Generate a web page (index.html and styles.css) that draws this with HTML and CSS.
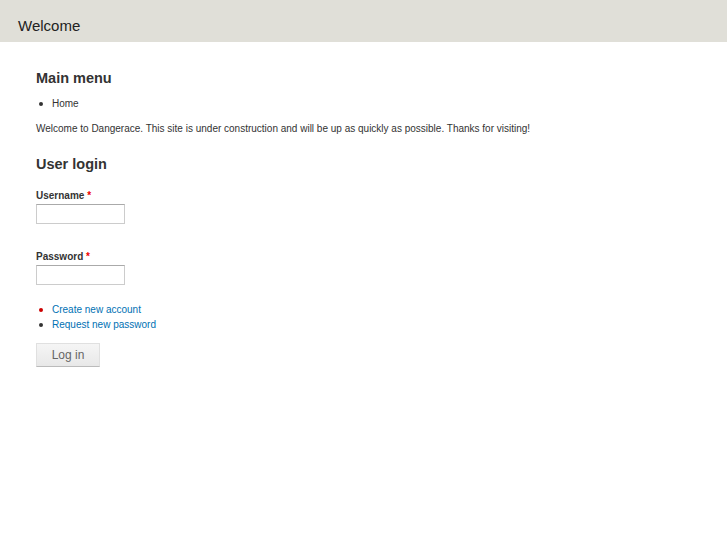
FILE: index.html
```html
<!DOCTYPE html>
<html>
<head>
<meta charset="utf-8">
<link rel="stylesheet" href="styles.css">
</head>
<body>
<header class="topbar"><span class="site-title">Welcome</span></header>
<main class="content">
  <section class="block">
    <h2 class="block-title">Main menu</h2>
    <ul class="menu">
      <li>Home</li>
    </ul>
    <p class="intro">Welcome to Dangerace. This site is under construction and will be up as quickly as possible. Thanks for visiting!</p>
  </section>
  <section class="block login">
    <h2 class="block-title">User login</h2>
    <div class="field">
      <label class="field-label">Username <span class="req">*</span></label>
      <input class="text-input" type="text">
    </div>
    <div class="field">
      <label class="field-label">Password <span class="req">*</span></label>
      <input class="text-input" type="password">
    </div>
    <ul class="links">
      <li class="first"><a href="#">Create new account</a></li>
      <li><a href="#">Request new password</a></li>
    </ul>
    <button class="btn" type="button">Log in</button>
  </section>
</main>
</body>
</html>
```
FILE: styles.css
```css
html, body {
  margin: 0;
  padding: 0;
  background: #fff;
  font-family: "Liberation Sans", Arial, sans-serif;
  color: #333;
}
.topbar {
  height: 42px;
  background: #e0dfd8;
  display: flex;
  align-items: center;
  padding-left: 18px;
  padding-top: 8px;
  box-sizing: border-box;
}
.site-title {
  font-size: 15px;
  color: #222;
}
.content {
  padding: 0 36px;
}
.block-title {
  font-size: 14.5px;
  font-weight: bold;
  color: #333;
  margin: 0;
  line-height: 20px;
}
.block {
  padding-top: 26px;
}
.login {
  padding-top: 18px;
}
.menu {
  list-style: none;
  margin: 8px 0 0;
  padding: 0;
  font-size: 10px;
}
.menu li, .links li {
  position: relative;
  padding-left: 16px;
  line-height: 15px;
}
.menu li::before, .links li::before {
  content: "";
  position: absolute;
  left: 3px;
  top: 6px;
  width: 4px;
  height: 4px;
  border-radius: 50%;
  background: #333;
}
.intro {
  font-size: 10px;
  margin: 10px 0 0;
  line-height: 15px;
}
.field {
  margin-top: 15px;
  display: flex;
  flex-direction: column;
  align-items: flex-start;
}
.field + .field {
  margin-top: 26px;
}
.field-label {
  font-size: 10px;
  font-weight: bold;
  line-height: 14px;
  margin-bottom: 1px;
}
.req {
  color: #e00;
}
.text-input {
  width: 89px;
  height: 20px;
  box-sizing: border-box;
  border: 1px solid #ccc;
  border-top-color: #aaa;
  margin: 0;
  padding: 2px 4px;
}
.links {
  list-style: none;
  margin: 17px 0 0;
  padding: 0;
  font-size: 10px;
}
.links li.first::before {
  background: #c00;
}
.links a {
  color: #0071b3;
  text-decoration: none;
}
.btn {
  margin-top: 11px;
  width: 64px;
  height: 24px;
  box-sizing: border-box;
  border: 1px solid #e0e0e0;
  border-bottom-color: #bbb;
  border-radius: 0;
  background: linear-gradient(#f5f5f5, #e8e8e8);
  color: #666;
  font-family: "Liberation Sans", Arial, sans-serif;
  font-size: 12px;
  padding: 0;
}
```
